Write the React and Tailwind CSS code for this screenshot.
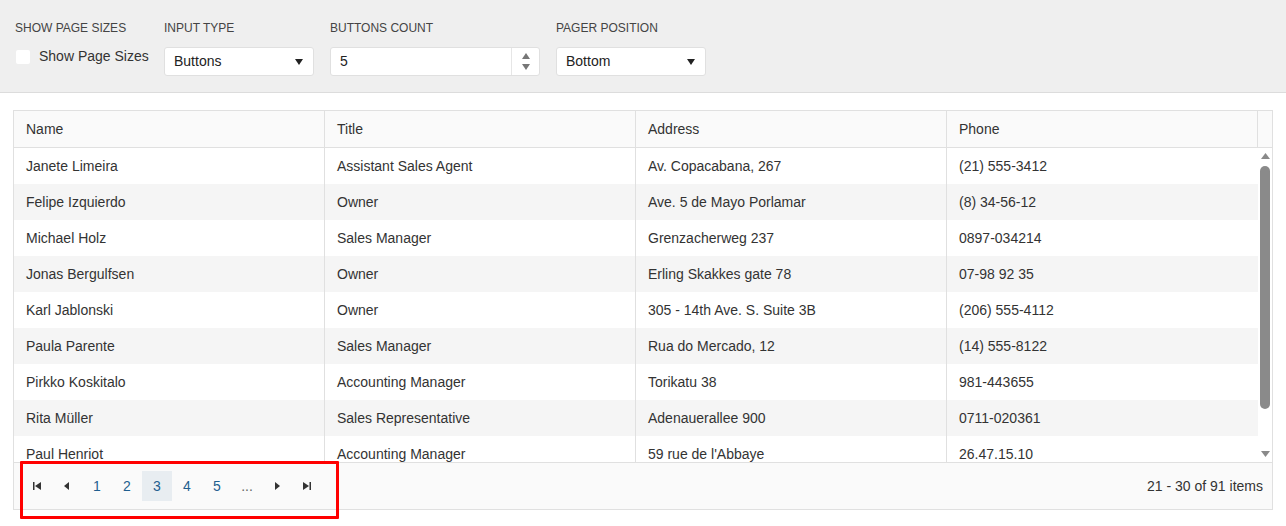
import React from 'react';

const rows = [
  ['Janete Limeira', 'Assistant Sales Agent', 'Av. Copacabana, 267', '(21) 555-3412'],
  ['Felipe Izquierdo', 'Owner', 'Ave. 5 de Mayo Porlamar', '(8) 34-56-12'],
  ['Michael Holz', 'Sales Manager', 'Grenzacherweg 237', '0897-034214'],
  ['Jonas Bergulfsen', 'Owner', 'Erling Skakkes gate 78', '07-98 92 35'],
  ['Karl Jablonski', 'Owner', '305 - 14th Ave. S. Suite 3B', '(206) 555-4112'],
  ['Paula Parente', 'Sales Manager', 'Rua do Mercado, 12', '(14) 555-8122'],
  ['Pirkko Koskitalo', 'Accounting Manager', 'Torikatu 38', '981-443655'],
  ['Rita Müller', 'Sales Representative', 'Adenauerallee 900', '0711-020361'],
  ['Paul Henriot', 'Accounting Manager', "59 rue de l'Abbaye", '26.47.15.10'],
];

const Caret = () => (
  <svg width="8" height="6" viewBox="0 0 8 6" className="fill-[#222]">
    <path d="M0 0h8L4 6z" />
  </svg>
);

const SelectBox = ({ value, width }) => (
  <div className={`${width} h-[29px] bg-white rounded-[3px] border border-[#e0e0e0] flex items-center justify-between pl-[9px] pr-[10px] text-[14px] text-[#222]`}>
    <span>{value}</span>
    <Caret />
  </div>
);

const Label = ({ children }) => (
  <div className="text-[12px] leading-[14px] text-[#444] uppercase mb-[12px] whitespace-nowrap">{children}</div>
);

const PagerIcon = ({ type }) => {
  const paths = {
    first: 'M1 1h1.5v8H1zM9 1v8L3 5z',
    prev: 'M7 1v8L2 5z',
    next: 'M3 1v8l5-4z',
    last: 'M1 1v8l6-4zM7.5 1H9v8H7.5z',
  };
  return (
    <svg width="10" height="10" viewBox="0 0 10 10" className="fill-[#333]">
      <path d={paths[type]} />
    </svg>
  );
};

const PagerButton = ({ children, active, muted }) => (
  <div
    className={`w-[30px] h-[30px] flex items-center justify-center text-[14px] ${
      active ? 'bg-[#e8edf1] text-[#1f5f8f]' : muted ? 'text-[#666]' : 'text-[#1f5f8f]'
    }`}
  >
    {children}
  </div>
);

export default function App() {
  return (
    <div className="w-[1286px] h-[526px] bg-white relative overflow-hidden font-['Liberation_Sans',Arial,sans-serif] text-[#333]">
      {/* options panel */}
      <div className="h-[93px] bg-[#efefef] border-b border-[#dcdcdc] flex pl-[15px] pt-[21px] gap-[16px]">
        <div className="w-[133px]">
          <Label>Show Page Sizes</Label>
          <div className="flex items-center gap-[9px] mt-[-1px] pl-px whitespace-nowrap">
            <div className="w-[14px] h-[14px] bg-white rounded-[2px] shrink-0" />
            <span className="text-[14px] text-[#333]">Show Page Sizes</span>
          </div>
        </div>
        <div>
          <Label>Input Type</Label>
          <SelectBox value="Buttons" width="w-[150px]" />
        </div>
        <div>
          <Label>Buttons Count</Label>
          <div className="w-[210px] h-[29px] bg-white rounded-[3px] border border-[#e0e0e0] flex text-[14px] text-[#222]">
            <div className="flex-1 flex items-center pl-[9px]">5</div>
            <div className="w-[28px] border-l border-[#e6e6e6] flex flex-col items-center justify-center gap-[5px]">
              <svg width="8" height="6" viewBox="0 0 8 6" className="fill-[#777]"><path d="M0 6h8L4 0z" /></svg>
              <svg width="8" height="6" viewBox="0 0 8 6" className="fill-[#777]"><path d="M0 0h8L4 6z" /></svg>
            </div>
          </div>
        </div>
        <div>
          <Label>Pager Position</Label>
          <SelectBox value="Bottom" width="w-[150px]" />
        </div>
      </div>

      {/* grid */}
      <div className="mx-[13px] mt-[17px] w-[1260px] h-[400px] border border-[#e0e0e0] flex flex-col">
        <div className="h-[37px] bg-[#fafafa] border-b border-[#e0e0e0] flex text-[14px] text-[#333]">
          {['Name', 'Title', 'Address', 'Phone'].map((h) => (
            <div key={h} className="w-[311px] border-r border-[#e0e0e0] flex items-center pl-[12px]">{h}</div>
          ))}
          <div className="flex-1" />
        </div>
        <div className="h-[314px] flex overflow-hidden">
          <div className="w-[1244px] overflow-hidden">
            {rows.map((r, i) => (
              <div key={r[0]} className={`h-[36px] flex text-[14px] text-[#333] ${i % 2 ? 'bg-[#f5f5f5]' : 'bg-white'}`}>
                {r.map((c, j) => (
                  <div key={j} className="w-[311px] border-r border-[#e0e0e0] flex items-center pl-[12px] last:border-r-0">{c}</div>
                ))}
              </div>
            ))}
          </div>
          <div className="flex-1 flex flex-col items-center py-[5px]">
            <svg width="9" height="6" viewBox="0 0 9 6" className="fill-[#8a8a8a]"><path d="M0 6h9L4.5 0z" /></svg>
            <div className="w-[10px] h-[243px] bg-[#8a8a8a] rounded-full mt-[7px]" />
            <div className="flex-1" />
            <svg width="9" height="6" viewBox="0 0 9 6" className="fill-[#8a8a8a]"><path d="M0 0h9L4.5 6z" /></svg>
          </div>
        </div>
        <div className="flex-1 bg-[#fafafa] border-t border-[#e0e0e0] flex items-center justify-between pl-[8px] pr-[9px]">
          <div className="flex items-center">
            <PagerButton><PagerIcon type="first" /></PagerButton>
            <PagerButton><PagerIcon type="prev" /></PagerButton>
            <PagerButton>1</PagerButton>
            <PagerButton>2</PagerButton>
            <PagerButton active>3</PagerButton>
            <PagerButton>4</PagerButton>
            <PagerButton>5</PagerButton>
            <PagerButton muted>...</PagerButton>
            <PagerButton><PagerIcon type="next" /></PagerButton>
            <PagerButton><PagerIcon type="last" /></PagerButton>
          </div>
          <span className="text-[14px] text-[#333]">21 - 30 of 91 items</span>
        </div>
      </div>

      {/* highlight annotation */}
      <div className="absolute left-[20px] top-[461px] w-[319px] h-[58px] border-[3px] border-[#ff0000] rounded-[1px] pointer-events-none" />
    </div>
  );
}
